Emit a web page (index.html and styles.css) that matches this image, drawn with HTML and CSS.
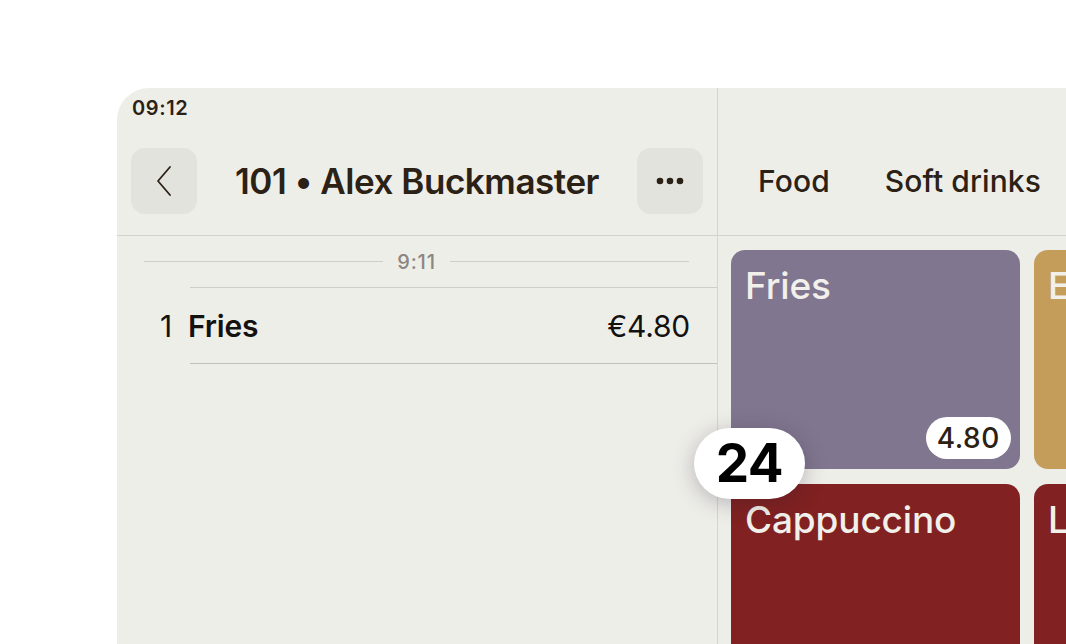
FILE: index.html
```html
<!DOCTYPE html>
<html>
<head>
<meta charset="utf-8">
<link rel="stylesheet" href="styles.css">
</head>
<body>
<div class="stage">
  <div class="device">
    <section class="order">
      <div class="status">09:12</div>
      <header class="order-head">
        <button class="icon-btn" aria-label="Back">
          <svg width="24" height="36" viewBox="0 0 24 36"><path d="M18 4 L6 18 L18 32" fill="none" stroke="#2b2115" stroke-width="1.8" stroke-linecap="round" stroke-linejoin="round"/></svg>
        </button>
        <h1 class="title">101 • Alex Buckmaster</h1>
        <button class="icon-btn" aria-label="More">
          <svg width="30" height="8" viewBox="0 0 30 8"><circle cx="5" cy="4" r="3.3" fill="#2b2115"/><circle cx="15" cy="4" r="3.3" fill="#2b2115"/><circle cx="25" cy="4" r="3.3" fill="#2b2115"/></svg>
        </button>
      </header>
      <div class="time-sep"><span class="rule"></span><span class="time">9:11</span><span class="rule"></span></div>
      <div class="lines">
        <div class="line">
          <span class="qty">1</span>
          <span class="name">Fries</span>
          <span class="price">€4.80</span>
        </div>
      </div>
    </section>
    <section class="menu">
      <nav class="tabs">
        <span class="tab">Food</span>
        <span class="tab">Soft drinks</span>
      </nav>
      <div class="grid">
        <div class="tile purple"><span class="tile-name">Fries</span><span class="pill">4.80</span></div>
        <div class="tile gold"><span class="tile-name">Espresso</span></div>
        <div class="tile red"><span class="tile-name">Cappuccino</span></div>
        <div class="tile red"><span class="tile-name">Latte</span></div>
      </div>
    </section>
    <div class="badge">24</div>
  </div>
</div>
</body>
</html>
```
FILE: styles.css
```css
* { box-sizing: border-box; }
html, body { margin: 0; padding: 0; }
body {
  background: #ffffff;
  width: 1066px;
  height: 644px;
  overflow: hidden;
  font-family: Inter, "Liberation Sans", sans-serif;
  color: #2b2115;
}
.stage {
  padding: 88px 0 0 117px;
  width: 1066px;
  height: 644px;
  overflow: hidden;
}
.device {
  position: relative;
  display: flex;
  width: 949px;
  height: 556px;
  background: #eeeee9;
  border-top-left-radius: 32px;
  overflow: hidden;
}
.order {
  width: 601px;
  flex: none;
  border-right: 1px solid #d5d5d0;
}
.status {
  height: 42px;
  padding: 8px 0 0 15px;
  font-size: 20px;
  font-weight: 600;
  letter-spacing: 0.6px;
}
.order-head {
  display: flex;
  align-items: center;
  height: 106px;
  padding: 0 14px 3px 14px;
  border-bottom: 1px solid #d3d3ce;
}
.icon-btn {
  width: 66px;
  height: 66px;
  border: 0;
  border-radius: 14px;
  background: #e3e3de;
  display: flex;
  align-items: center;
  justify-content: center;
  padding: 0;
  flex: none;
}
.title {
  flex: 1;
  margin: 0 0 0 38px;
  font-size: 35px;
  font-weight: 600;
  letter-spacing: -0.45px;
  color: #2b2115;
}
.time-sep {
  display: flex;
  align-items: center;
  gap: 14px;
  padding: 0 28px 0 27px;
  height: 51px;
}
.rule {
  flex: 1;
  height: 1px;
  background: #cfcfca;
}
.time {
  font-size: 20px;
  font-weight: 500;
  letter-spacing: 0.8px;
  color: #8c8680;
}
.lines {
  margin-left: 73px;
  border-top: 1px solid #d0cec9;
  border-bottom: 1px solid #c4c1bc;
}
.line {
  display: flex;
  align-items: center;
  height: 75px;
  margin-left: -30px;
  padding-right: 27px;
  font-size: 30px;
  color: #141210;
  letter-spacing: -0.2px;
}
.qty { margin-right: 16px; }
.name { font-weight: 600; flex: 1; }
.price { font-weight: 400; }
.menu {
  flex: 1;
}
.tabs {
  display: flex;
  align-items: center;
  gap: 55px;
  height: 148px;
  padding: 39px 0 0 40px;
  border-bottom: 1px solid #d3d3ce;
  font-size: 30px;
  font-weight: 500;
  letter-spacing: 0.1px;
  white-space: nowrap;
}
.grid {
  display: grid;
  grid-template-columns: 289px 289px;
  grid-auto-rows: 219px;
  gap: 15px 14px;
  padding: 14px 0 0 13px;
}
.tile {
  position: relative;
  border-radius: 14px;
  padding: 17px 14px;
  color: #f1f0ea;
  font-size: 37px;
  font-weight: 500;
  letter-spacing: -0.15px;
  line-height: 1;
  white-space: nowrap;
  overflow: hidden;
}
.purple { background: #81768f; }
.gold { background: #c59d5a; }
.red { background: #812121; }
.pill {
  position: absolute;
  right: 9px;
  bottom: 10px;
  height: 42px;
  padding: 0 11px;
  border-radius: 21px;
  background: #ffffff;
  color: #2b2115;
  font-size: 28px;
  font-weight: 500;
  line-height: 42px;
  letter-spacing: 0.6px;
}
.badge {
  position: absolute;
  left: 577px;
  top: 340px;
  width: 111px;
  height: 71px;
  border-radius: 36px;
  background: #ffffff;
  color: #000000;
  font-size: 53px;
  font-weight: 700;
  line-height: 71px;
  text-align: center;
  letter-spacing: -0.5px;
  box-shadow: 0 4px 22px rgba(40, 30, 50, 0.28);
}
```
